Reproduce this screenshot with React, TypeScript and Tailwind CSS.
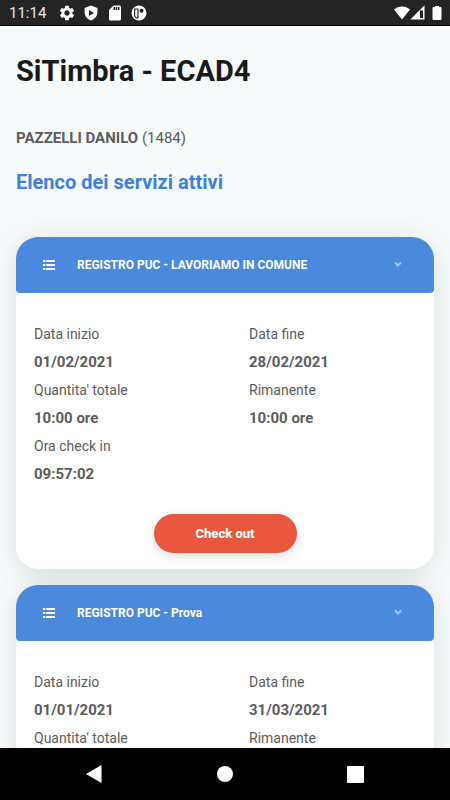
import { useState } from "react";
import { MdSdCard, MdSettings } from "react-icons/md";

type Field = { label: string; value?: string };
type Service = { id: string; title: string; fields: Field[]; action?: string };

const services: Service[] = [
  {
    id: "lavoriamo",
    title: "REGISTRO PUC - LAVORIAMO IN COMUNE",
    fields: [
      { label: "Data inizio", value: "01/02/2021" },
      { label: "Data fine", value: "28/02/2021" },
      { label: "Quantita' totale", value: "10:00 ore" },
      { label: "Rimanente", value: "10:00 ore" },
      { label: "Ora check in", value: "09:57:02" },
    ],
    action: "Check out",
  },
  {
    id: "prova",
    title: "REGISTRO PUC - Prova",
    fields: [
      { label: "Data inizio", value: "01/01/2021" },
      { label: "Data fine", value: "31/03/2021" },
      { label: "Quantita' totale" },
      { label: "Rimanente" },
    ],
  },
];

function ListIcon() {
  return (
    <svg viewBox="0 0 12 10" className="h-2.5 w-3 shrink-0" fill="currentColor" aria-hidden="true">
      <path d="M0 0h2.400v2H0zM3.200 0H12v2H3.200zM0 4h2.400v2H0zM3.200 4H12v2H3.200zM0 8h2.400v2H0zM3.200 8H12v2H3.200z" />
    </svg>
  );
}

function ChevronIcon() {
  return (
    <svg viewBox="0 0 8 8" className="size-2 shrink-0 opacity-50" aria-hidden="true">
      <path d="M1 1.500 4 4.500 7 1.500" fill="none" stroke="currentColor" strokeWidth="2" />
    </svg>
  );
}

function StatusBar() {
  return (
    <div className="flex h-[26px] shrink-0 items-center border-b border-black bg-[#242424] pr-2 pl-[9px] text-white">
      <span className="text-[15px] leading-[26px] text-[#e8e8e8]">11:14</span>
      <div className="ml-3 flex items-center gap-1.5">
        <MdSettings className="size-[18px]" aria-hidden="true" />
        <svg viewBox="-1 -1 18 18" className="size-[18px]" fill="currentColor" aria-hidden="true">
          <path
            fillRule="evenodd"
            d="M8 .5 1.600 3v4.600c0 3.600 2.600 6.600 6.400 7.900 3.800-1.300 6.400-4.300 6.400-7.900V3zM5.900 4.900v6.200L11 8z"
          />
        </svg>
        <MdSdCard className="size-[18px]" aria-hidden="true" />
        <svg viewBox="-1 -1 18 18" className="size-[18px]" aria-hidden="true">
          <circle cx="8" cy="8" r="7.500" fill="#fff" />
          <path
            d="M3.600 4H7v8.800H6.100a2.500 2.500 0 0 1-2.500-2.500z"
            fill="none"
            stroke="#242424"
            strokeWidth="1.200"
          />
          <circle cx="10.500" cy="5.800" r="2" fill="#242424" />
        </svg>
      </div>
      <div className="ml-auto flex items-center">
        <svg viewBox="0 0 16 14" className="h-3.5 w-4" fill="currentColor" aria-hidden="true">
          <path d="M0 3.500C4.500-.5 11.500-.5 16 3.500L8 13.500z" />
        </svg>
        <svg viewBox="0 0 15 15" className="size-[15px]" aria-hidden="true">
          <path d="M14.500 .3V14.500H.3z" fill="#fff" />
          <path d="M10 5.500h3v7.500h-3z" fill="#242424" />
        </svg>
        <svg viewBox="0 0 10 14" className="ml-[7px] h-3.5 w-2.5" fill="currentColor" aria-hidden="true">
          <path d="M3 0h4v1h1.500q1 0 1 1v11q0 1-1 1h-7q-1 0-1-1V2q0-1 1-1H3z" />
        </svg>
      </div>
    </div>
  );
}

function ServiceCard({ service }: { service: Service }) {
  const [open, setOpen] = useState(true);
  return (
    <section className="rounded-[22px] bg-white shadow-[0_4px_28px_rgba(50,60,55,0.16)]">
      <h3>
        <button
          type="button"
          aria-expanded={open}
          aria-controls={service.id}
          onClick={() => setOpen(!open)}
          className="flex h-14 w-full items-center rounded-t-[22px] rounded-b-[4px] bg-[#4a89dc] pr-8 pl-[27px] text-left text-xs font-bold text-white"
        >
          <ListIcon />
          <span className="ml-[22px] flex-1">{service.title}</span>
          <ChevronIcon />
        </button>
      </h3>
      {open && (
        <div id={service.id} className="px-[18px] pt-[27px] pb-4">
          <dl className="grid grid-cols-2 gap-x-12 leading-7">
            {service.fields.map((field) => (
              <div key={field.label}>
                <dt className="text-sm leading-7">{field.label}</dt>
                {field.value && <dd className="text-[15px] leading-7 font-bold">{field.value}</dd>}
              </div>
            ))}
          </dl>
          {service.action && (
            <button
              type="button"
              className="mx-auto mt-[26px] block h-[39px] w-[143px] rounded-full bg-[#e9573f] text-[13px] font-extrabold text-white shadow-[0_4px_12px_rgba(0,0,0,0.12)]"
            >
              {service.action}
            </button>
          )}
        </div>
      )}
    </section>
  );
}

function NavigationBar() {
  return (
    <nav className="grid h-[52px] shrink-0 grid-cols-3 items-center bg-black px-[30px] text-white">
      <button type="button" aria-label="Indietro" className="flex justify-center">
        <svg viewBox="0 0 18 18" className="size-[18px]" fill="currentColor" aria-hidden="true">
          <path d="M15.500 0v18L0 9z" />
        </svg>
      </button>
      <button type="button" aria-label="Home" className="flex justify-center">
        <span className="size-4 rounded-full bg-white" />
      </button>
      <button type="button" aria-label="Recenti" className="flex justify-center">
        <span className="size-[17px] rounded-[1px] bg-white" />
      </button>
    </nav>
  );
}

export default function App() {
  return (
    <div className="flex h-screen flex-col bg-[#f7fbfc] font-['Roboto',sans-serif] text-[#5c5c5c]">
      <StatusBar />
      <main className="min-h-0 flex-1 overflow-y-auto px-4 [scrollbar-width:none]">
        <h1 className="mt-[25px] text-[29px] leading-10 font-bold text-[#1a1a1a]">SiTimbra - ECAD4</h1>
        <p className="mt-[33px] text-[15px] leading-7">
          <strong className="font-bold">PAZZELLI DANILO</strong> (1484)
        </p>
        <h2 className="mt-4 text-xl leading-7 font-bold text-[#3f82dc]">Elenco dei servizi attivi</h2>
        <div className="mt-[41px] flex flex-col gap-4 pb-4">
          {services.map((service) => (
            <ServiceCard key={service.id} service={service} />
          ))}
        </div>
      </main>
      <NavigationBar />
    </div>
  );
}
